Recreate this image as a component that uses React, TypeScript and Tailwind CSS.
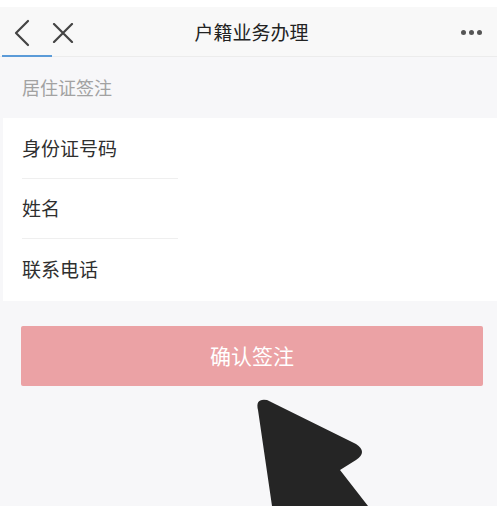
import React from 'react';

const font = { fontFamily: '"Noto Sans CJK SC", "Noto Sans", sans-serif' };

function Row({ label, divider }: { label: string; divider?: boolean }) {
  return (
    <div className="h-[60px] flex flex-col">
      <div className="flex-1 flex items-center pl-[19px] text-[19px] text-[#2f2f2f]">{label}</div>
      {divider && <div className="ml-[19px] w-[156px] h-px bg-[#efefef]" />}
    </div>
  );
}

export default function App() {
  return (
    <div className="relative w-[497px] h-[506px] overflow-hidden bg-[#f7f7f9]" style={font}>
      <div className="h-[7px] bg-white" />
      {/* header */}
      <div className="relative h-[50px] bg-[#f8f8f8] border-b border-[#ececec] flex items-center">
        <svg className="absolute left-[12px] top-[12px]" width="20" height="28" viewBox="0 0 20 28">
          <path d="M16 2 L4 14 L16 26" fill="none" stroke="#444" strokeWidth="2.2" strokeLinecap="round" strokeLinejoin="round" />
        </svg>
        <svg className="absolute left-[52px] top-[16px]" width="22" height="20" viewBox="0 0 22 20">
          <path d="M2 1 L20 19 M20 1 L2 19" fill="none" stroke="#444" strokeWidth="2.2" strokeLinecap="round" />
        </svg>
        <div className="flex-1 text-center text-[19px] text-[#222222] pl-[6px] pt-[2px]">户籍业务办理</div>
        <div className="absolute right-[15px] top-[23px] flex gap-[3px]">
          <span className="w-[5px] h-[5px] rounded-full bg-[#555]" />
          <span className="w-[5px] h-[5px] rounded-full bg-[#555]" />
          <span className="w-[5px] h-[5px] rounded-full bg-[#555]" />
        </div>
        <div className="absolute left-[2px] bottom-[-1px] w-[50px] h-[2px] bg-[#5b9bd8]" />
      </div>
      {/* section */}
      <div className="h-[61px] flex items-center pl-[22px] text-[18px] text-[#a2a2a2]">居住证签注</div>
      <div className="bg-white ml-[3px] pt-px pb-[2px]">
        <Row label="身份证号码" divider />
        <Row label="姓名" divider />
        <Row label="联系电话" />
      </div>
      <div className="px-[21px] pt-[25px] pr-[14px]">
        <button className="w-full h-[60px] rounded-[2px] bg-[#eba2a5] text-white text-[21px] flex items-center justify-center">
          确认签注
        </button>
      </div>
      {/* pointer overlay */}
      <svg className="absolute left-0 top-0 pointer-events-none" width="497" height="506" viewBox="0 0 497 506">
        <path
          d="M258 410 Q255 398 267 400 L356 444 Q368 452 356 460 L340 470 L368 506 L272 506 Z"
          fill="#252525"
        />
      </svg>
    </div>
  );
}
